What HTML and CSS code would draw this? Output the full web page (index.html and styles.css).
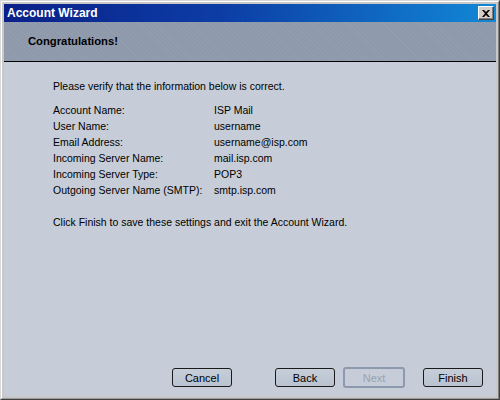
FILE: index.html
```html
<!DOCTYPE html>
<html>
<head>
<meta charset="utf-8">
<link rel="stylesheet" href="styles.css">
</head>
<body>
<div class="window">
  <div class="frame">
    <div class="titlebar">
      <span class="title">Account Wizard</span>
      <button class="close" aria-label="Close">
        <svg width="8" height="7" viewBox="0 0 8 7"><path d="M0 0h2l2 2 2-2h2L5 3.5 8 7H6L4 5 2 7H0l3-3.5z" fill="#000"/></svg>
      </button>
    </div>
    <div class="header">Congratulations!</div>
    <div class="content">
      <p class="intro">Please verify that the information below is correct.</p>
      <div class="info">
        <span>Account Name:</span><span>ISP Mail</span>
        <span>User Name:</span><span>username</span>
        <span>Email Address:</span><span>username@isp.com</span>
        <span>Incoming Server Name:</span><span>mail.isp.com</span>
        <span>Incoming Server Type:</span><span>POP3</span>
        <span>Outgoing Server Name (SMTP):</span><span>smtp.isp.com</span>
      </div>
      <p class="outro">Click Finish to save these settings and exit the Account Wizard.</p>
      <div class="buttons">
        <button class="btn cancel">Cancel</button>
        <button class="btn back">Back</button>
        <button class="btn next" disabled>Next</button>
        <button class="btn finish">Finish</button>
      </div>
    </div>
  </div>
</div>
</body>
</html>
```
FILE: styles.css
```css
* { box-sizing: border-box; }
html, body { margin: 0; padding: 0; }
body {
  width: 500px;
  height: 400px;
  font-family: "Liberation Sans", Arial, sans-serif;
  font-size: 10.5px;
  color: #000;
  background: #c6cdd8;
}
.window {
  width: 500px;
  height: 400px;
  border-top: 1px solid #d8d8d8;
  border-left: 1px solid #d8d8d8;
  border-right: 1px solid #404040;
  border-bottom: 1px solid #404040;
}
.frame {
  height: 100%;
  display: flex;
  flex-direction: column;
  border-top: 1px solid #ffffff;
  border-left: 1px solid #ffffff;
  border-right: 1px solid #808080;
  border-bottom: 1px solid #9a9a9a;
  background: #c8c8c8;
  padding: 2px 2px 2px 2px;
}
.titlebar {
  height: 18px;
  flex: none;
  display: flex;
  align-items: center;
  justify-content: space-between;
  padding: 0 2px 0 3px;
  background: linear-gradient(to right, #0a2088 0%, #0c3ea6 45%, #1288d6 100%);
}
.title {
  color: #fff;
  font-weight: bold;
  font-size: 12px;
}
.close {
  width: 16px;
  height: 14px;
  padding: 0;
  display: flex;
  align-items: center;
  justify-content: center;
  background: #d4d0c8;
  border-top: 1px solid #fff;
  border-left: 1px solid #fff;
  border-right: 1px solid #404040;
  border-bottom: 1px solid #404040;
  box-shadow: inset -1px -1px 0 #808080;
}
.header {
  height: 40px;
  flex: none;
  display: flex;
  align-items: center;
  padding: 0 0 2px 24px;
  font-weight: bold;
  font-size: 11.25px;
  background-color: #8e99ab;
  background-image: repeating-linear-gradient(45deg, rgba(255,255,255,0.04) 0 1px, transparent 1px 3px);
  border-bottom: 1px solid #000;
}
.content {
  flex: 1;
  display: flex;
  flex-direction: column;
  background: #c6cdd8;
  padding: 16px 13px 8px 49px;
}
.content p {
  margin: 0;
  line-height: 16px;
}
.info {
  display: grid;
  grid-template-columns: 161px auto;
  grid-auto-rows: 16px;
  align-items: center;
  margin-top: 8px;
}
.outro {
  margin-top: 16px !important;
}
.buttons {
  margin-top: auto;
  display: flex;
  justify-content: flex-end;
  align-items: center;
}
.btn {
  width: 60px;
  height: 19px;
  padding: 0;
  font-family: "Liberation Sans", Arial, sans-serif;
  font-size: 11px;
  color: #000;
  background: linear-gradient(#c6ced9, #b9c2cf);
  border: 1px solid #1a1a1a;
  border-radius: 3px;
}
.cancel { margin-right: 43px; }
.back { margin-right: 8px; }
.next {
  width: 62px;
  height: 21px;
  margin-right: 18px;
  color: #98a2b2;
  background: #c6cdd8;
  border: 2px solid #8d99ac;
}
```
